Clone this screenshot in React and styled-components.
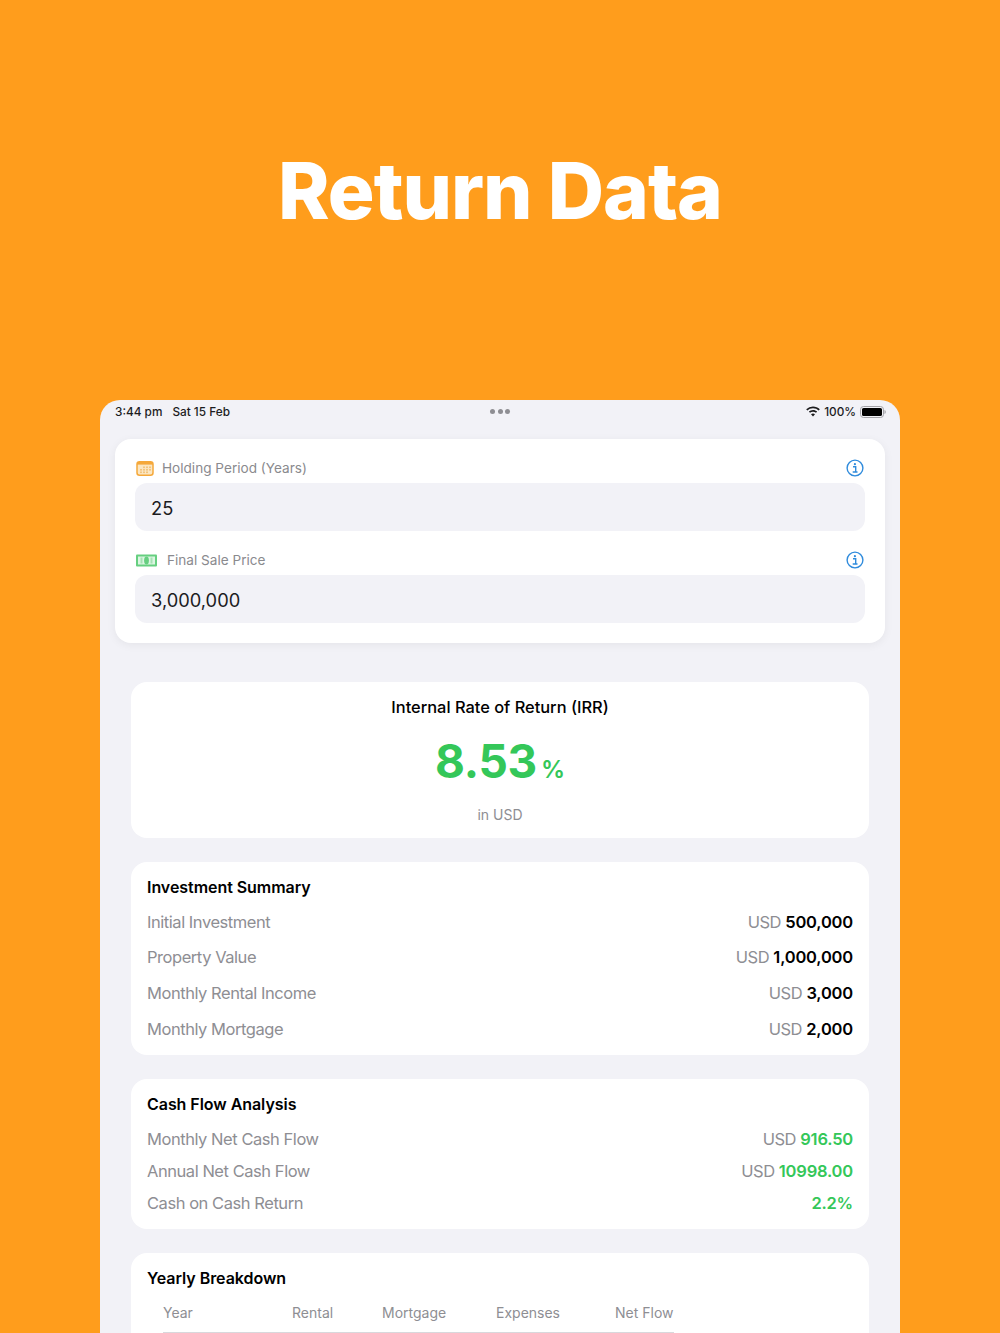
import React from 'react'
import styled, { createGlobalStyle } from 'styled-components'

const GlobalStyle = createGlobalStyle`
    html, body {
        margin: 0;
        padding: 0;
        background: #ff9d1c;
    }
    body {
        font-family: Inter, "Noto Sans", "Liberation Sans", sans-serif;
        -webkit-font-smoothing: antialiased;
    }
    * {
        box-sizing: border-box;
    }
`

const summaryRows = [
    { label: 'Initial Investment', value: '500,000' },
    { label: 'Property Value', value: '1,000,000' },
    { label: 'Monthly Rental Income', value: '3,000' },
    { label: 'Monthly Mortgage', value: '2,000' },
]

const cashRows = [
    { label: 'Monthly Net Cash Flow', value: '916.50', currency: true },
    { label: 'Annual Net Cash Flow', value: '10998.00', currency: true },
    { label: 'Cash on Cash Return', value: '2.2%' },
]

const tableHeads = ['Year', 'Rental', 'Mortgage', 'Expenses', 'Net Flow']

function CalendarIcon() {
    return (
        <svg width="18" height="15" viewBox="0 0 18 15">
            <rect x="1" y="0.75" width="16" height="13.5" rx="2.5" fill="#fbe6c2" stroke="#f5a83a" strokeWidth="1.5" />
            <rect x="1" y="1" width="16" height="2.6" fill="#f5a83a" />
            <g fill="#f3c47c">
                <rect x="7" y="5.5" width="2" height="1.6" />
                <rect x="10" y="5.5" width="2" height="1.6" />
                <rect x="13" y="5.5" width="2" height="1.6" />
                <rect x="4" y="8" width="2" height="1.6" />
                <rect x="7" y="8" width="2" height="1.6" />
                <rect x="10" y="8" width="2" height="1.6" />
                <rect x="13" y="8" width="2" height="1.6" />
                <rect x="4" y="10.5" width="2" height="1.6" />
                <rect x="7" y="10.5" width="2" height="1.6" />
                <rect x="10" y="10.5" width="2" height="1.6" />
            </g>
        </svg>
    )
}

function MoneyIcon() {
    return (
        <svg width="21" height="13" viewBox="0 0 21 13">
            <rect x="0" y="0.5" width="21" height="12" rx="1" fill="#66cf80" />
            <rect x="2" y="2.5" width="17" height="8" fill="#dcf5e2" />
            <ellipse cx="10.5" cy="6.5" rx="2.4" ry="4" fill="#66cf80" />
            <rect x="4.5" y="3.5" width="2" height="6" fill="#a5e2b4" />
            <rect x="14.5" y="3.5" width="2" height="6" fill="#a5e2b4" />
        </svg>
    )
}

function InfoIcon() {
    return (
        <svg width="18" height="18" viewBox="0 0 18 18">
            <circle cx="9" cy="9" r="7.9" fill="none" stroke="#2f8bdc" strokeWidth="1.4" />
            <circle cx="8.9" cy="5.2" r="1.1" fill="#2f8bdc" />
            <path d="M7 7.7h2.7v5M6.7 13h4.8" fill="none" stroke="#2f8bdc" strokeWidth="1.4" />
        </svg>
    )
}

function WifiIcon() {
    return (
        <svg width="14" height="11" viewBox="0 0 14 11">
            <path d="M7 0.5c2.6 0 5 1 6.8 2.7l-1.1 1.2A8.3 8.3 0 0 0 7 2.2a8.3 8.3 0 0 0-5.7 2.2L0.2 3.2A9.9 9.9 0 0 1 7 0.5z" fill="#1c1c1e" />
            <path d="M7 4c1.6 0 3 .6 4.2 1.6l-1.2 1.2A4.6 4.6 0 0 0 7 5.7c-1.1 0-2.2.4-3 1.1L2.8 5.6A6.3 6.3 0 0 1 7 4z" fill="#1c1c1e" />
            <path d="M7 7.4c.8 0 1.4.3 2 .8L7 10.4 5 8.2c.6-.5 1.2-.8 2-.8z" fill="#1c1c1e" />
        </svg>
    )
}

function BatteryIcon() {
    return (
        <svg width="26" height="12" viewBox="0 0 26 12">
            <rect x="0.5" y="0.5" width="23" height="11" rx="3" fill="none" stroke="#a3a3a8" />
            <rect x="2" y="2" width="20" height="8" rx="1.6" fill="#000" />
            <path d="M24.5 4v4c.8-.3 1.3-1.1 1.3-2s-.5-1.7-1.3-2z" fill="#a3a3a8" />
        </svg>
    )
}

export default function App() {
    return (
        <>
            <GlobalStyle />
            <Page>
                <Hero>
                    <HeroTitle>Return Data</HeroTitle>
                </Hero>
                <Tablet>
                    <StatusBar>
                        <StatusLeft>
                            <span>3:44 pm</span>
                            <span>Sat 15 Feb</span>
                        </StatusLeft>
                        <Dots>
                            <i />
                            <i />
                            <i />
                        </Dots>
                        <StatusRight>
                            <WifiIcon />
                            <span>100%</span>
                            <BatteryIcon />
                        </StatusRight>
                    </StatusBar>

                    <FormCard>
                        <Field>
                            <FieldHead>
                                <FieldLabel $gap={8}>
                                    <CalendarIcon />
                                    Holding Period (Years)
                                </FieldLabel>
                                <InfoIcon />
                            </FieldHead>
                            <FieldInput>25</FieldInput>
                        </Field>
                        <Field>
                            <FieldHead>
                                <FieldLabel $gap={10}>
                                    <MoneyIcon />
                                    Final Sale Price
                                </FieldLabel>
                                <InfoIcon />
                            </FieldHead>
                            <FieldInput>3,000,000</FieldInput>
                        </Field>
                    </FormCard>

                    <Results>
                        <IrrCard>
                            <IrrTitle>Internal Rate of Return (IRR)</IrrTitle>
                            <IrrValue>
                                8.53<IrrUnit>%</IrrUnit>
                            </IrrValue>
                            <IrrNote>in USD</IrrNote>
                        </IrrCard>

                        <Card>
                            <CardTitle>Investment Summary</CardTitle>
                            <Rows $height={35.67} $top={7} $bottom={8}>
                                {summaryRows.map((row) => (
                                    <Row key={row.label}>
                                        <RowLabel>{row.label}</RowLabel>
                                        <span>
                                            <Currency>USD </Currency>
                                            <Amount>{row.value}</Amount>
                                        </span>
                                    </Row>
                                ))}
                            </Rows>
                        </Card>

                        <Card>
                            <CardTitle>Cash Flow Analysis</CardTitle>
                            <Rows $height={32} $top={9} $bottom={10}>
                                {cashRows.map((row) => (
                                    <Row key={row.label}>
                                        <RowLabel>{row.label}</RowLabel>
                                        <span>
                                            {row.currency && <Currency>USD </Currency>}
                                            <Amount $positive>{row.value}</Amount>
                                        </span>
                                    </Row>
                                ))}
                            </Rows>
                        </Card>

                        <Card>
                            <CardTitle>Yearly Breakdown</CardTitle>
                            <TableHead>
                                {tableHeads.map((head) => (
                                    <span key={head}>{head}</span>
                                ))}
                            </TableHead>
                        </Card>
                    </Results>
                </Tablet>
            </Page>
        </>
    )
}

const Page = styled.div`
    width: 1000px;
    height: 1333px;
    overflow: hidden;
    background: #ff9d1c;
`
const Hero = styled.header`
    height: 400px;
    padding-top: 148px;
    display: flex;
    justify-content: center;
    align-items: flex-start;
`
const HeroTitle = styled.h1`
    margin: 0;
    color: #fff;
    font-size: 78px;
    line-height: 86px;
    font-weight: 800;
    letter-spacing: -1px;
`
const Tablet = styled.main`
    width: 800px;
    height: 933px;
    margin: 0 auto;
    padding: 0 15px;
    overflow: hidden;
    background: #f2f2f7;
    border-radius: 20px 20px 0 0;
`
const StatusBar = styled.div`
    height: 23px;
    display: grid;
    grid-template-columns: 1fr auto 1fr;
    align-items: center;
    font-size: 11.8px;
    font-weight: 500;
    color: #1c1c1e;
`
const StatusLeft = styled.div`
    display: flex;
    gap: 10px;
`
const Dots = styled.div`
    display: flex;
    gap: 2.5px;
    i {
        width: 5px;
        height: 5px;
        border-radius: 50%;
        background: #8e8e93;
    }
`
const StatusRight = styled.div`
    display: flex;
    align-items: center;
    justify-content: flex-end;
    gap: 4px;
    margin-right: -1px;
`
const FormCard = styled.section`
    margin-top: 16px;
    height: 204px;
    padding: 20px;
    display: flex;
    flex-direction: column;
    gap: 20px;
    background: #fff;
    border-radius: 16px;
    box-shadow: 0 2px 10px rgba(0, 0, 0, 0.06);
`
const Field = styled.div`
    display: flex;
    flex-direction: column;
    gap: 6px;
`
const FieldHead = styled.div`
    height: 18px;
    display: flex;
    align-items: center;
    justify-content: space-between;
    padding-right: 1px;
`
const FieldLabel = styled.div`
    display: flex;
    align-items: center;
    gap: ${(p) => p.$gap}px;
    padding-left: 1px;
    font-size: 13.6px;
    line-height: 16px;
    color: #8a8a8e;
`
const FieldInput = styled.div`
    height: 48px;
    padding: 2px 16px 0;
    display: flex;
    align-items: center;
    font-size: 18.3px;
    color: #1c1c1e;
    background: #f2f2f7;
    border-radius: 12px;
`
const Results = styled.div`
    margin-top: 39px;
    padding: 0 16px;
    display: flex;
    flex-direction: column;
    gap: 24px;
`
const Card = styled.section`
    padding: 15px 16px 0;
    background: #fff;
    border-radius: 16px;
`
const IrrCard = styled(Card)`
    height: 156px;
    display: flex;
    flex-direction: column;
    align-items: center;
`
const IrrTitle = styled.div`
    font-size: 16.4px;
    line-height: 20px;
    font-weight: 500;
    color: #000;
`
const IrrValue = styled.div`
    margin-top: 19px;
    font-size: 46px;
    line-height: 50px;
    font-weight: 700;
    letter-spacing: -0.3px;
    color: #34c759;
`
const IrrUnit = styled.span`
    margin-left: 4px;
    font-size: 24px;
    font-weight: 600;
    letter-spacing: 0;
`
const IrrNote = styled.div`
    margin-top: 10px;
    font-size: 14px;
    line-height: 20px;
    color: #8e8e93;
`
const CardTitle = styled.h3`
    margin: 0;
    font-size: 16px;
    line-height: 20px;
    font-weight: 600;
    letter-spacing: -0.05px;
    color: #000;
`
const Rows = styled.div`
    margin: ${(p) => p.$top}px 0 ${(p) => p.$bottom}px;
    display: grid;
    grid-auto-rows: ${(p) => p.$height}px;
    font-size: 16.5px;
    letter-spacing: -0.45px;
`
const Row = styled.div`
    display: flex;
    align-items: center;
    justify-content: space-between;
`
const RowLabel = styled.span`
    color: #8e8e93;
`
const Currency = styled.span`
    color: #8e8e93;
`
const Amount = styled.span`
    font-weight: 600;
    letter-spacing: -0.2px;
    color: ${(p) => (p.$positive ? '#34c759' : '#000')};
`
const TableHead = styled.div`
    width: 511px;
    margin: 16px 0 40px 16px;
    padding-bottom: 10px;
    display: grid;
    grid-template-columns: 129px 90px 114px 119px 59px;
    font-size: 14px;
    line-height: 18px;
    color: #8e8e93;
    border-bottom: 1px solid #d8d8dc;
`
